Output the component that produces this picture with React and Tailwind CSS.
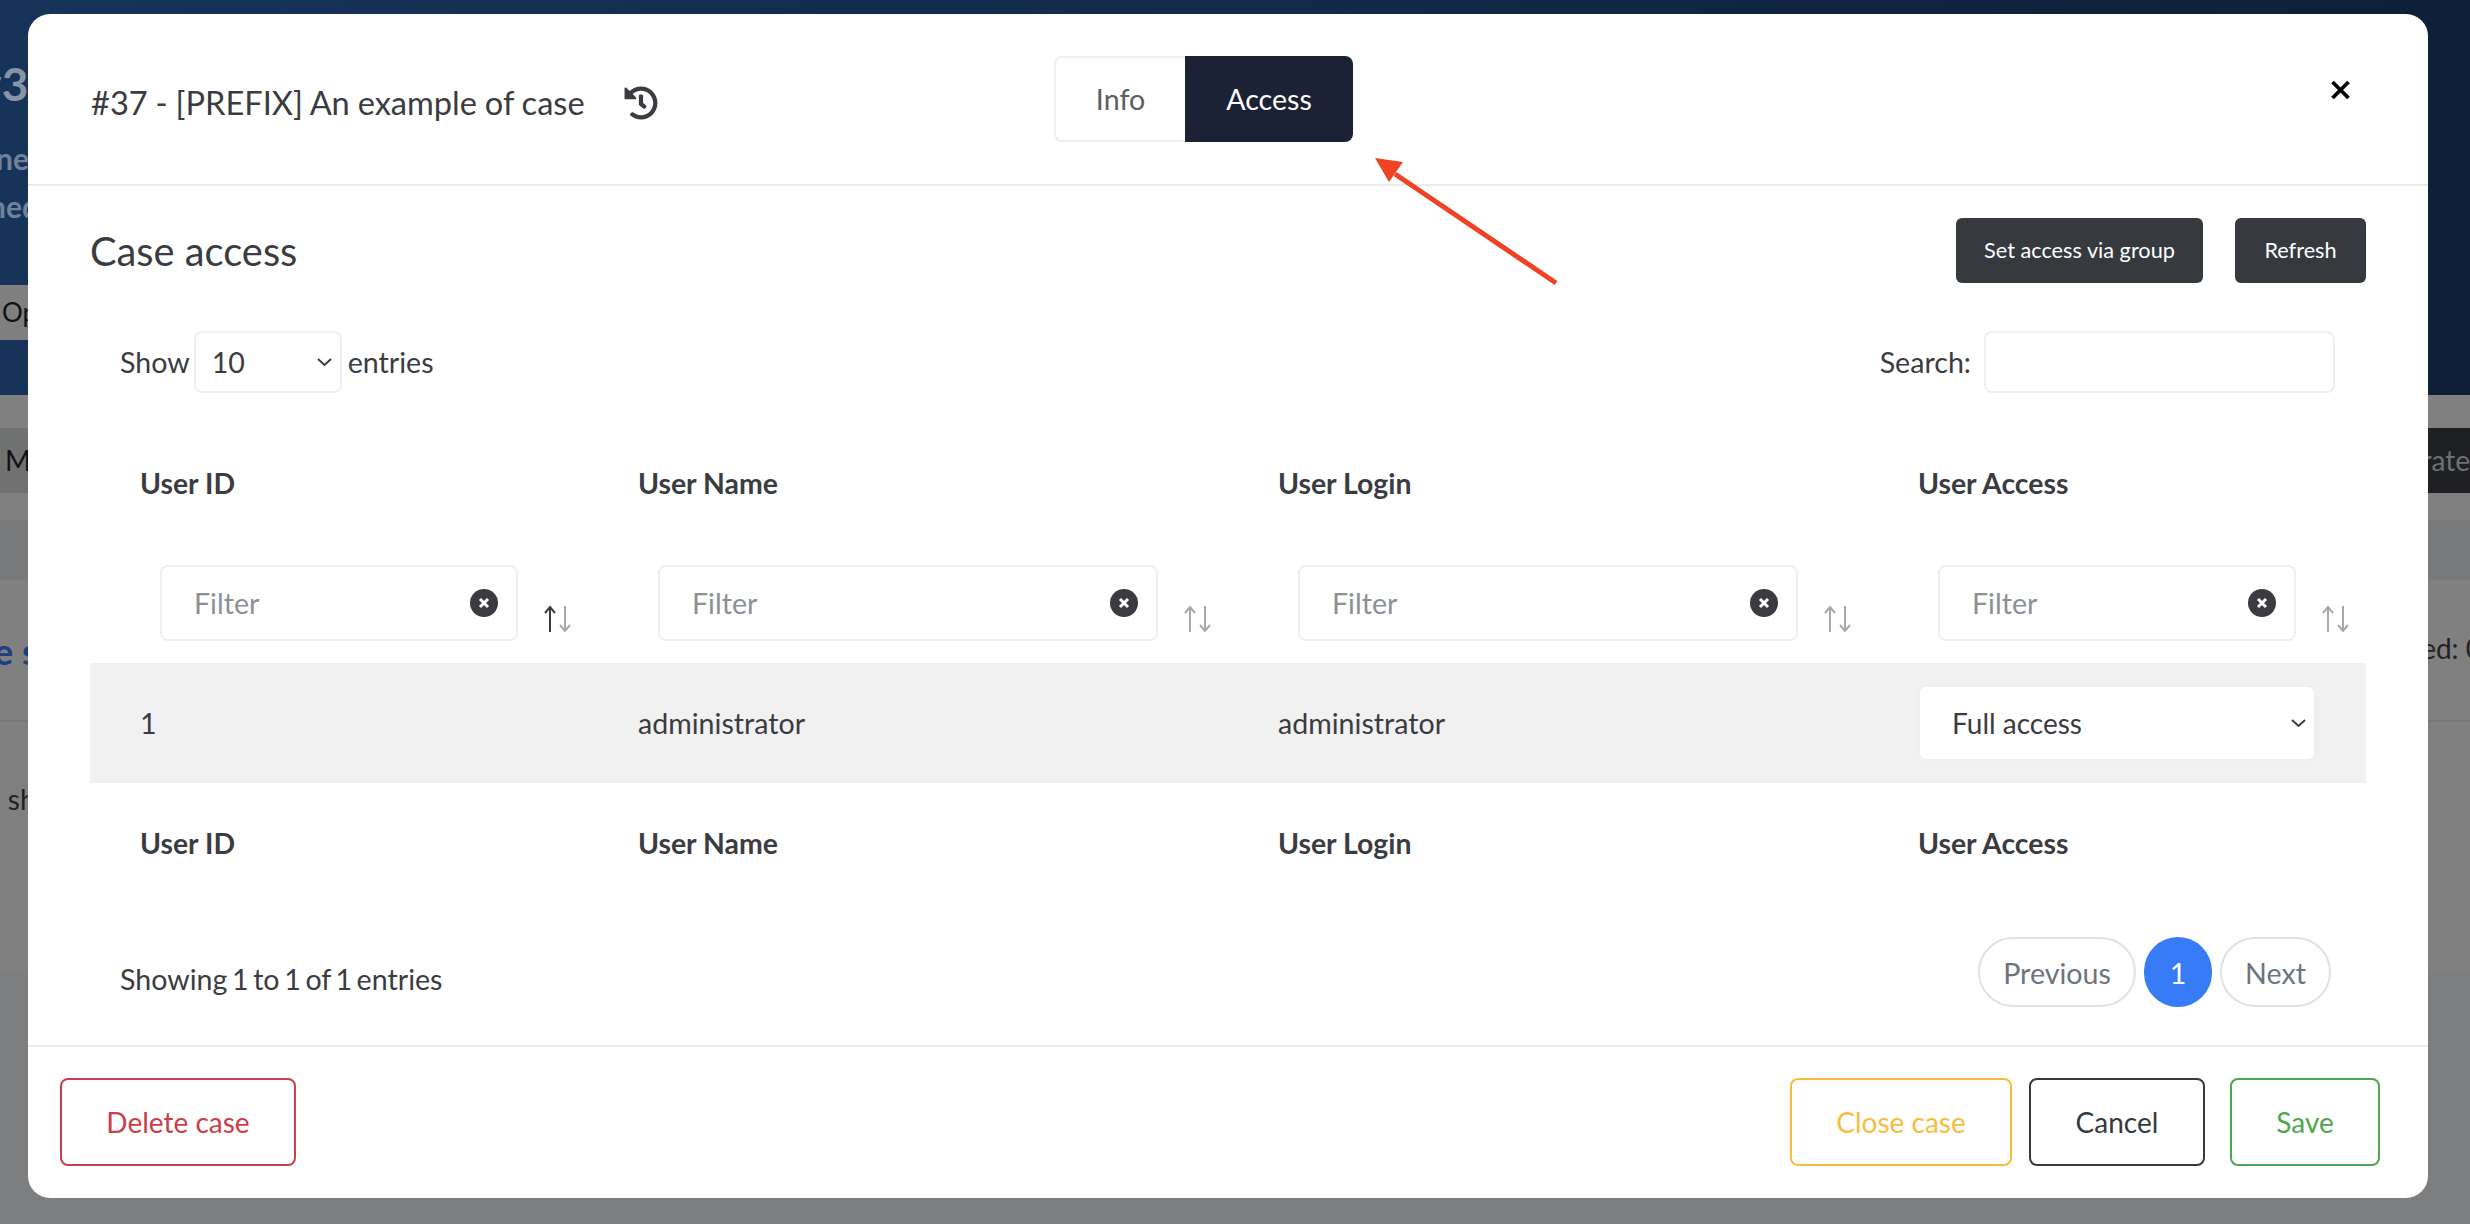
import { FaHistory } from "react-icons/fa";

const columns = ["User ID", "User Name", "User Login", "User Access"];

function SortIcon({ active }) {
  return (
    <svg width="27" height="28" viewBox="0 0 27 28" fill="none" className="mb-[8px] shrink-0">
      <path d="M6 27V2M1 8l5-6 5 6" stroke={active ? "#3a3c41" : "#a9a9a9"} strokeWidth="2" />
      <path d="M21 1v25M16 20l5 6 5-6" stroke="#a9a9a9" strokeWidth="2" />
    </svg>
  );
}

function FilterBox({ className, active }) {
  return (
    <div className="flex items-end gap-[26px] font-normal -mt-[1px]">
      <div className={`flex items-center h-[76px] border-2 border-[#eeeef4] rounded-lg pl-[32px] pr-[18px] ${className}`}>
        <input placeholder="Filter" className="flex-1 min-w-0 outline-none text-[#3a3c41] placeholder:text-[#8b9096]" />
        <span className="w-[28px] h-[28px] rounded-full bg-[#3a3c41] flex items-center justify-center shrink-0">
          <svg width="12" height="12" viewBox="0 0 12 12">
            <path d="M2 2l8 8M10 2l-8 8" stroke="#fff" strokeWidth="3" />
          </svg>
        </span>
      </div>
      <SortIcon active={active} />
    </div>
  );
}

function Chevron() {
  return (
    <svg width="17" height="9" viewBox="0 0 17 9" fill="none" className="absolute right-[9px] top-1/2 -translate-y-1/2 pointer-events-none">
      <path d="M2 1.5l6.5 6 6.5-6" stroke="#3a3c41" strokeWidth="2" />
    </svg>
  );
}

function BackgroundPage() {
  return (
    <div className="flex flex-col h-full text-[28px]">
      <div className="h-[395px] bg-gradient-to-r from-[#17335a] to-[#0e2038] flex flex-col shrink-0 text-[#6f8299] font-bold">
        <div className="h-[134px] pt-[54px] text-[46px] leading-[60px] -ml-[25px] text-[#8694a8]">#3</div>
        <div className="h-[48px] leading-[48px] text-[30px] -ml-[4px]">ne</div>
        <div className="h-[48px] leading-[48px] text-[30px] -ml-[11px]">ned</div>
        <div className="mt-[55px] h-[55px] w-[60px] bg-[#7f7f7f] text-[#111] font-normal text-[26px] leading-[55px] pl-[2px]">Op</div>
      </div>
      <div className="h-[125px] bg-[#808080] pt-[33px] flex justify-between shrink-0">
        <div className="h-[65px] w-[60px] bg-[#707171] text-[#111] leading-[65px] pl-[5px]">Ma</div>
        <div className="h-[65px] w-[60px] bg-[#1e2023] text-[#6f7072] leading-[65px] whitespace-nowrap overflow-hidden flex justify-end">erate</div>
      </div>
      <div className="h-[60px] bg-[#78797b] shrink-0" />
      <div className="h-[142px] bg-[#808080] border-b-2 border-[#777] flex justify-between pt-[44px] shrink-0">
        <span className="text-[#1b3f80] text-[36px] font-bold -ml-[6px]">e s</span>
        <span className="text-[#222] mt-[3px] -mr-[12px]">ed: 0</span>
      </div>
      <div className="h-[250px] bg-[#808080] pt-[56px] shrink-0 text-[#222] -ml-[6px]">. sh</div>
      <div className="flex-1 bg-[#7d7e80]" />
    </div>
  );
}

export default function App() {
  return (
    <div className="relative w-[2470px] h-[1224px] overflow-hidden font-['Lato',sans-serif] antialiased">
      <BackgroundPage />

      {/* Modal */}
      <div className="absolute left-[28px] top-[14px] w-[2400px] h-[1184px] bg-white rounded-[22px] flex flex-col text-[28.6px] text-[#3a3c41]">
        {/* Header */}
        <div className="grid grid-cols-[1026px_1fr_auto] h-[172px] border-b-2 border-[#e9ecef] shrink-0">
          <div className="flex items-start pl-[63px] pt-[66px] gap-[39px]">
            <span className="text-[32.6px] leading-[46px] whitespace-nowrap [word-spacing:-0.5px]">#37 - [PREFIX] An example of case</span>
            <FaHistory size={34} color="#3a3c41" className="shrink-0 mt-[6px]" />
          </div>
          <div className="flex items-start pt-[42px]">
            <div className="flex h-[86px]">
              <div className="w-[131px] flex items-center justify-center border-2 border-r-0 border-[#eeeeee] rounded-l-lg text-[#5c5e60]">Info</div>
              <div className="w-[168px] flex items-center justify-center bg-[#1c2235] text-white rounded-r-lg">Access</div>
            </div>
          </div>
          <div className="pt-[66px] pr-[77px]">
            <svg width="21" height="20" viewBox="0 0 21 20">
              <path d="M2.5 2l16 16M18.5 2l-16 16" stroke="#000" strokeWidth="3.8" />
            </svg>
          </div>
        </div>

        {/* Body */}
        <div className="flex-1 px-[62px] pt-[32px] flex flex-col">
          <div className="flex items-center justify-between">
            <h2 className="text-[39.8px] leading-[65px]">Case access</h2>
            <div className="flex gap-[32px] text-[21.7px] text-white">
              <button className="w-[247px] h-[65px] bg-[#363a3f] rounded-md">Set access via group</button>
              <button className="w-[131px] h-[65px] bg-[#363a3f] rounded-md">Refresh</button>
            </div>
          </div>

          <div className="flex items-center justify-between mt-[48px] pl-[30px] pr-[31px]">
            <div className="flex items-center">
              <span>Show</span>
              <div className="relative ml-[4px] mr-[6px]">
                <select className="w-[148px] h-[62px] border-2 border-[#eeeef4] rounded-lg pl-[16px] appearance-none outline-none">
                  <option>10</option>
                </select>
                <Chevron />
              </div>
              <span>entries</span>
            </div>
            <div className="flex items-center gap-[13px]">
              <span>Search:</span>
              <input className="w-[351px] h-[62px] border-2 border-[#eeeef4] rounded-lg outline-none" />
            </div>
          </div>

          <table className="w-[2276px] table-fixed border-collapse">
            <colgroup>
              <col className="w-[498px]" />
              <col className="w-[640px]" />
              <col className="w-[640px]" />
              <col className="w-[498px]" />
            </colgroup>
            <thead>
              <tr className="h-[173px]">
                {columns.map((c) => (
                  <th key={c} className="text-left align-top pl-[50px] pt-[75px] leading-[30px] font-bold text-[28.4px]">{c}</th>
                ))}
              </tr>
              <tr className="h-[97px]">
                <th className="align-top pl-[70px] text-left"><FilterBox className="w-[358px]" active /></th>
                <th className="align-top pl-[70px] text-left"><FilterBox className="w-[500px]" /></th>
                <th className="align-top pl-[70px] text-left"><FilterBox className="w-[500px]" /></th>
                <th className="align-top pl-[70px] text-left"><FilterBox className="w-[358px]" /></th>
              </tr>
            </thead>
            <tbody>
              <tr className="h-[120px] bg-[#f1f1f2]">
                <td className="pl-[50px]">1</td>
                <td className="pl-[50px]">administrator</td>
                <td className="pl-[50px]">administrator</td>
                <td className="pl-[50px]">
                  <div className="relative w-[398px]">
                    <select className="w-[398px] h-[76px] bg-white border-2 border-[#eeeef4] rounded-lg pl-[32px] text-[28px] appearance-none outline-none">
                      <option>Full access</option>
                    </select>
                    <Chevron />
                  </div>
                </td>
              </tr>
            </tbody>
            <tfoot>
              <tr className="h-[120px]">
                {columns.map((c) => (
                  <th key={c} className="text-left pl-[50px] font-bold text-[28.4px]">{c}</th>
                ))}
              </tr>
            </tfoot>
          </table>

          <div className="flex items-center justify-between mt-[34px] pl-[30px] pr-[35px] h-[70px]">
            <span className="pt-[14px] [word-spacing:-2.7px]">Showing 1 to 1 of 1 entries</span>
            <div className="flex gap-[8px] text-[#6c757d]">
              <button className="w-[158px] h-[70px] border-2 border-[#dee2e6] rounded-full pt-[3px]">Previous</button>
              <button className="w-[68px] h-[70px] bg-[#377bf7] text-white rounded-full pt-[3px]">1</button>
              <button className="w-[111px] h-[70px] border-2 border-[#dee2e6] rounded-full pt-[3px]">Next</button>
            </div>
          </div>
        </div>

        {/* Footer */}
        <div className="flex items-start justify-between h-[153px] shrink-0 border-t-2 border-[#e9ecef] pl-[32px] pr-[48px] pt-[31px] text-[28px]">
          <button className="w-[236px] h-[88px] border-2 border-[#cc3e48] text-[#cc3e48] rounded-lg">Delete case</button>
          <div className="flex">
            <button className="w-[222px] h-[88px] border-2 border-[#f7bd3c] text-[#f7bd3c] rounded-lg mr-[17px]">Close case</button>
            <button className="w-[176px] h-[88px] border-2 border-[#363a3f] text-[#363a3f] rounded-lg mr-[25px]">Cancel</button>
            <button className="w-[150px] h-[88px] border-2 border-[#4fa650] text-[#4fa650] rounded-lg">Save</button>
          </div>
        </div>
      </div>

      {/* Annotation arrow */}
      <svg width="200" height="140" viewBox="0 0 200 140" className="absolute left-[1365px] top-[150px]">
        <path d="M191 133L30 24" stroke="#ee4324" strokeWidth="5" />
        <path d="M10 8L38 12L24 32Z" fill="#ee4324" />
      </svg>
    </div>
  );
}
